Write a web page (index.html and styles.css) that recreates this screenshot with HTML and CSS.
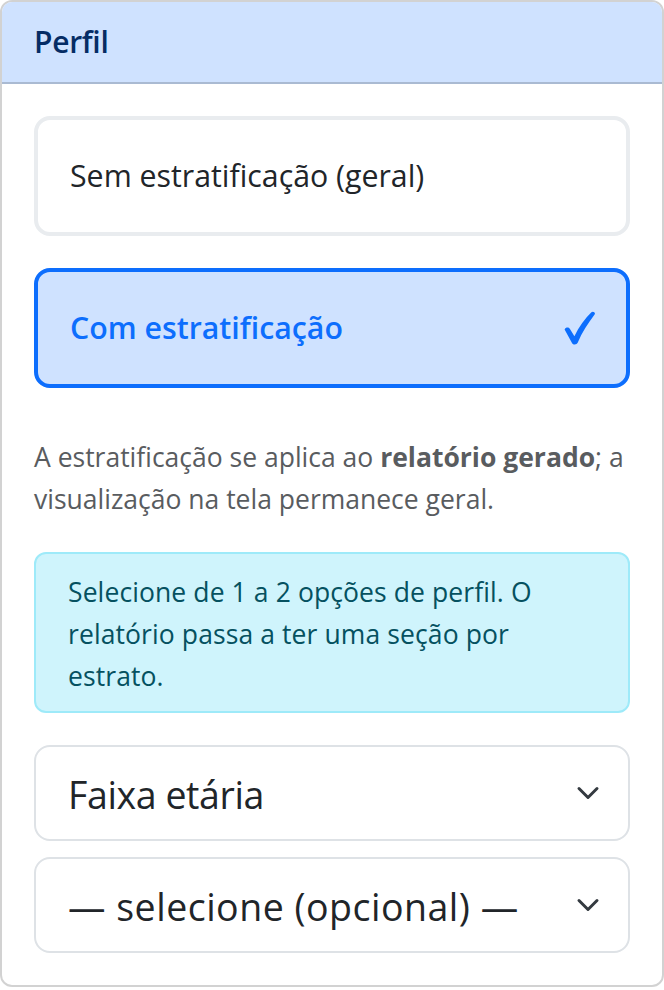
FILE: index.html
```html
<!DOCTYPE html>
<html lang="pt-BR">
<head>
<meta charset="utf-8">
<title>Perfil</title>
<link rel="stylesheet" href="styles.css">
</head>
<body>
<div class="card">
  <div class="card-header">Perfil</div>
  <div class="card-body">
    <div class="options">
      <div class="option">Sem estratificação (geral)</div>
      <div class="option active">
        <span>Com estratificação</span>
        <svg class="check" viewBox="0 0 32 34" width="32" height="34"><path d="M1.6 18.4 C2.6 16.2 5.6 16 6.8 17.8 L11.4 25.2 C16 15.5 22 7.5 28.4 1.2 C30 -0.3 33 1.6 31.6 3.6 C25 12.5 19 21.5 14.8 31.6 C13.8 34 10.2 34.2 9 32 Z" fill="#0d6efd"/></svg>
      </div>
    </div>
    <p class="note">A estratificação se aplica ao <strong>relatório gerado</strong>; a visualização na tela permanece geral.</p>
    <div class="alert">Selecione de 1 a 2 opções de perfil. O relatório passa a ter uma seção por estrato.</div>
    <div class="select">
      <span>Faixa etária</span>
      <svg class="chev" viewBox="0 0 16 16" width="24" height="24"><path d="m2 5 6 6 6-6" fill="none" stroke="#343a40" stroke-width="2" stroke-linecap="round" stroke-linejoin="round"/></svg>
    </div>
    <div class="select">
      <span class="placeholder">— selecione (opcional) —</span>
      <svg class="chev" viewBox="0 0 16 16" width="24" height="24"><path d="m2 5 6 6 6-6" fill="none" stroke="#343a40" stroke-width="2" stroke-linecap="round" stroke-linejoin="round"/></svg>
    </div>
  </div>
</div>
</body>
</html>
```

FILE: styles.css
```css
* { box-sizing: border-box; }
html, body { margin: 0; padding: 0; background: #fff; }
body {
  font-family: "Open Sans", "Noto Sans", "Liberation Sans", sans-serif;
  color: #212529;
  width: 664px;
}
.card {
  width: 664px;
  border: 2px solid rgba(0,0,0,.175);
  border-radius: 12px;
  overflow: hidden;
}
.card-header {
  background: #cfe2ff;
  color: #052c65;
  font-weight: 600;
  font-size: 30px;
  line-height: 48px;
  padding: 16px 32px;
  border-bottom: 2px solid rgba(0,0,0,.175);
  letter-spacing: -0.3px;
}
.card-body {
  padding: 32px;
}
.options {
  display: flex;
  flex-direction: column;
  gap: 32px;
  margin-bottom: 48px;
}
.option {
  display: flex;
  justify-content: space-between;
  align-items: center;
  border: 4px solid #e9ecef;
  border-radius: 16px;
  padding: 32px 31px 32px 32px;
  font-size: 30.3px;
  line-height: 48px;
  letter-spacing: 0;
  color: #212529;
}
.option.active {
  border-color: #0d6efd;
  background: #cfe2ff;
  color: #0d6efd;
  font-weight: 600;
}
.check { display: block; flex: none; }
.note {
  margin: 0 0 32px;
  font-size: 26.5px;
  line-height: 42px;
  color: #595c5f;
  letter-spacing: 0;
}
.note strong { font-weight: 700; }
.alert {
  background: #cff4fc;
  border: 2px solid #9eeaf9;
  border-radius: 12px;
  color: #055160;
  padding: 17px 32px 14px;
  font-size: 26.5px;
  line-height: 42px;
  letter-spacing: 0.1px;
  margin-bottom: 32px;
}
.select {
  display: flex;
  justify-content: space-between;
  align-items: center;
  border: 2px solid #dee2e6;
  border-radius: 16px;
  padding: 18px 28px 14px 32px;
  font-size: 37.5px;
  line-height: 60px;
  letter-spacing: -0.4px;
  color: #212529;
}
.select .chev { margin-top: -4px; }
.select .placeholder { letter-spacing: 0.5px; }
.select + .select { margin-top: 16px; }
.chev { display: block; flex: none; }
```
